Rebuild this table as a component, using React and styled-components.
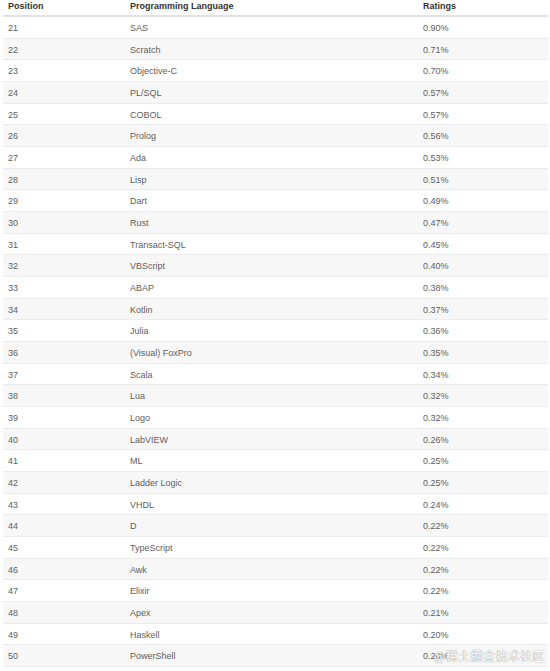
import React from 'react';
import styled, { createGlobalStyle } from 'styled-components';

const rows = [
  [21, 'SAS', '0.90%'],
  [22, 'Scratch', '0.71%'],
  [23, 'Objective-C', '0.70%'],
  [24, 'PL/SQL', '0.57%'],
  [25, 'COBOL', '0.57%'],
  [26, 'Prolog', '0.56%'],
  [27, 'Ada', '0.53%'],
  [28, 'Lisp', '0.51%'],
  [29, 'Dart', '0.49%'],
  [30, 'Rust', '0.47%'],
  [31, 'Transact-SQL', '0.45%'],
  [32, 'VBScript', '0.40%'],
  [33, 'ABAP', '0.38%'],
  [34, 'Kotlin', '0.37%'],
  [35, 'Julia', '0.36%'],
  [36, '(Visual) FoxPro', '0.35%'],
  [37, 'Scala', '0.34%'],
  [38, 'Lua', '0.32%'],
  [39, 'Logo', '0.32%'],
  [40, 'LabVIEW', '0.26%'],
  [41, 'ML', '0.25%'],
  [42, 'Ladder Logic', '0.25%'],
  [43, 'VHDL', '0.24%'],
  [44, 'D', '0.22%'],
  [45, 'TypeScript', '0.22%'],
  [46, 'Awk', '0.22%'],
  [47, 'Elixir', '0.22%'],
  [48, 'Apex', '0.21%'],
  [49, 'Haskell', '0.20%'],
  [50, 'PowerShell', '0.20%'],
];

const GlobalStyle = createGlobalStyle`
  html, body {
    margin: 0;
    padding: 0;
    background: #ffffff;
  }
  body {
    font-family: "Liberation Sans", Arial, sans-serif;
  }
`;

const Page = styled.div`
  position: relative;
  width: 550px;
  height: 671px;
  overflow: hidden;
  background: #ffffff;
`;

const Table = styled.div`
  margin-left: 3px;
  width: 545px;
`;

const Row = styled.div`
  display: grid;
  grid-template-columns: 122px 293px 1fr;
  align-items: center;
  box-sizing: border-box;
  height: ${({ header }) => (header ? '17px' : '21.68px')};
  border-bottom: ${({ header }) => (header ? '2px solid #e2e2e2' : '1px solid #ececec')};
  background: ${({ shaded }) => (shaded ? '#f7f7f7' : '#ffffff')};
`;

const HeadCell = styled.div`
  padding-left: 5px;
  padding-bottom: 3px;
  font-size: 9px;
  font-weight: bold;
  color: #333333;
  white-space: nowrap;
`;

const Cell = styled.div`
  padding-left: 5px;
  padding-top: 1px;
  font-size: 9px;
  color: #5e5e5e;
  white-space: nowrap;
`;

const Watermark = styled.div`
  position: absolute;
  right: 5px;
  bottom: 8px;
  font-family: "Noto Sans CJK SC", sans-serif;
  font-size: 12px;
  line-height: 14px;
  color: #ffffff;
  text-shadow: 0 0 1px #9a9a9a, 0 0 1px #9a9a9a;
  letter-spacing: 0.4px;
`;

export default function App() {
  return (
    <Page>
      <GlobalStyle />
      <Table>
        <Row header>
          <HeadCell>Position</HeadCell>
          <HeadCell>Programming Language</HeadCell>
          <HeadCell>Ratings</HeadCell>
        </Row>
        {rows.map(([pos, lang, rating]) => (
          <Row key={pos} shaded={pos % 2 === 0}>
            <Cell>{pos}</Cell>
            <Cell>{lang}</Cell>
            <Cell>{rating}</Cell>
          </Row>
        ))}
      </Table>
      <Watermark>@稀土掘金技术社区</Watermark>
    </Page>
  );
}
